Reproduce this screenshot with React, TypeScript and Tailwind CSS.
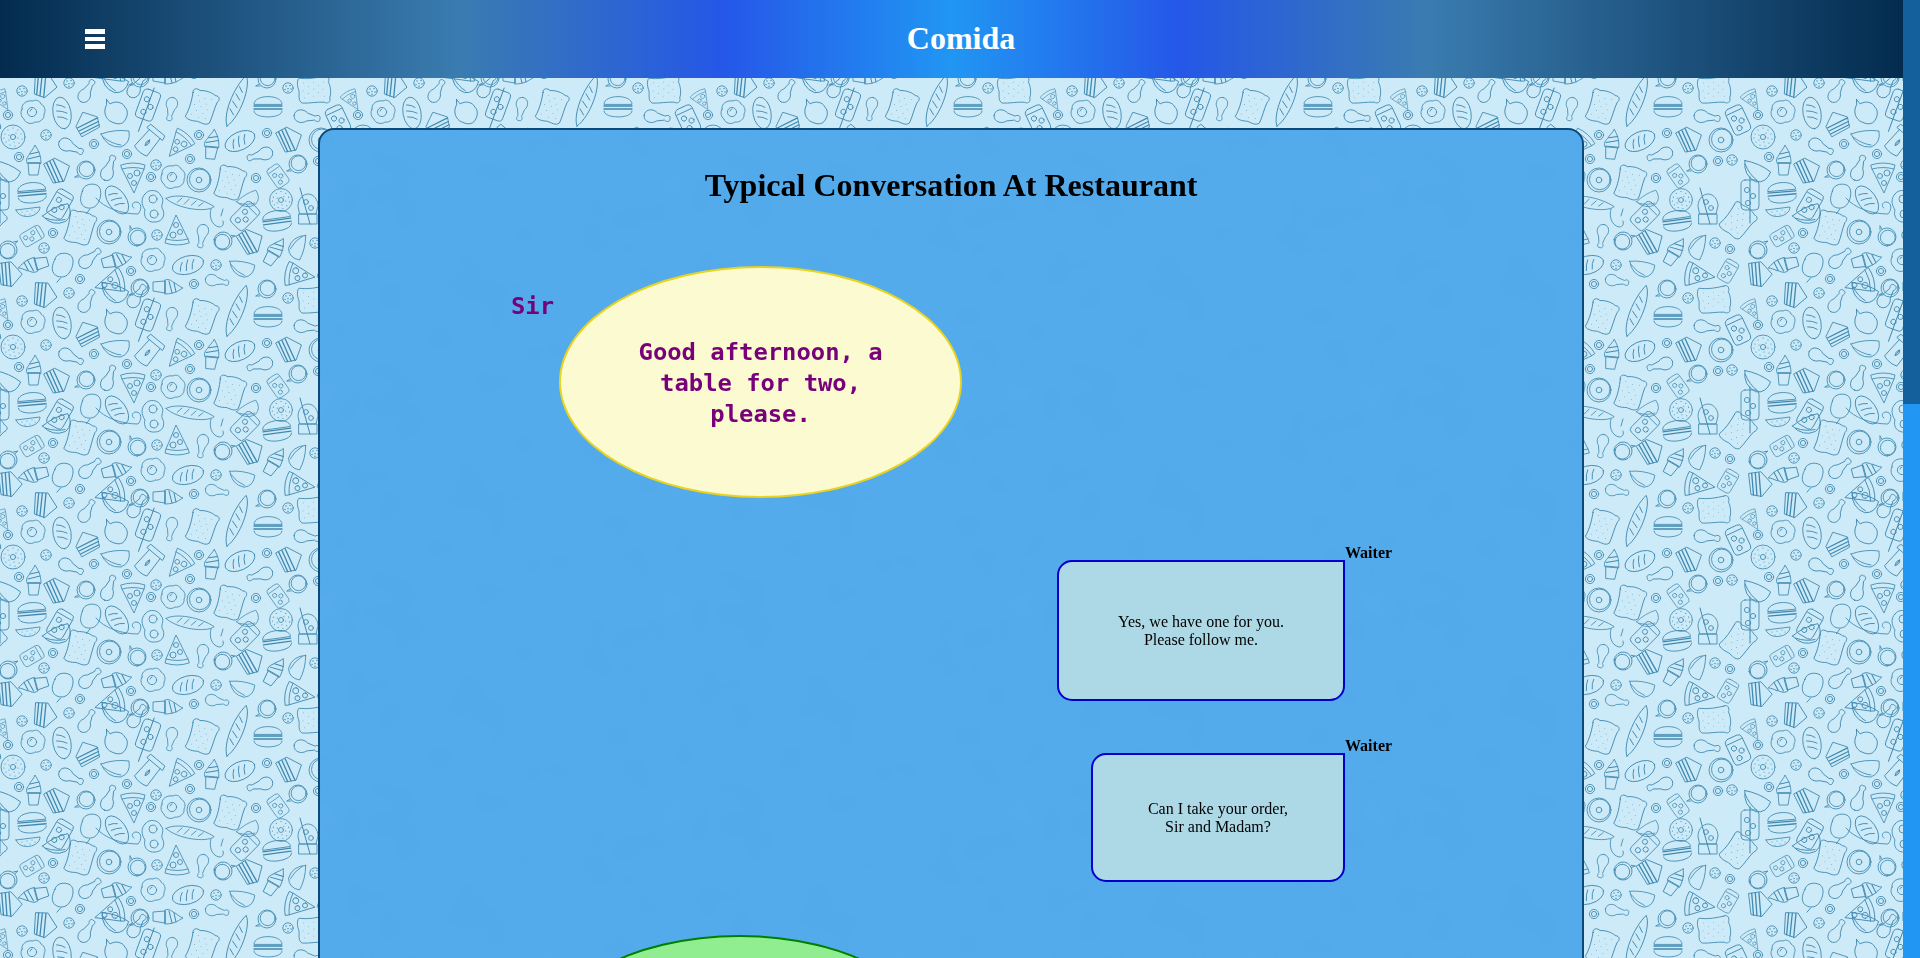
import React from 'react';

// food doodles for the wallpaper, each drawn around 0,0
const dots = (pts: number[][], r = 0.5) =>
  pts.map(([x, y], i) => <circle key={i} cx={x} cy={y} r={r} fill="#3f88b0" stroke="none" />);

const shapes: Record<string, React.ReactNode> = {
  drumstick: (
    <path d="M-13,0 C-13,-7 -4,-8 0,-4 L8,-2 C10,-4 14,-3 13,0 C14,3 10,4 8,2 L0,4 C-4,8 -13,7 -13,0Z" />
  ),
  egg: (
    <>
      <path d="M-11,-3 C-12,-9 -5,-12 0,-11 C3,-13 7,-11 8,-8 C12,-6 13,-1 11,2 C12,7 6,11 2,10 C-2,13 -8,11 -9,7 C-12,5 -13,0 -11,-3Z" />
      <circle cx={-1} cy={0} r={4.6} />
      <path d="M-3,-1 A2.5,2.5 0 0 1 -1,-3" />
    </>
  ),
  loaf: (
    <>
      <ellipse rx={16} ry={9} />
      <path d="M-9,4 Q-8,-1 -5,-4 M-3,5 Q-2,-1 1,-5 M3,5 Q4,-1 7,-4" />
    </>
  ),
  baguette: (
    <>
      <path d="M-27,2 C-18,-7 10,-9 27,-3 C20,6 -12,10 -27,2Z" />
      <path d="M-14,3 L-10,-3 M-6,3 L-2,-4 M2,2 L6,-4 M10,1 L14,-4" />
    </>
  ),
  cake: (
    <>
      <path d="M-12,1 L-2,-12 L12,-4 L12,7 L-8,13Z" />
      <path d="M-11,3 L12,-3 M-10,6.5 L12,1 M-9,10 L12,4.5" strokeWidth={1.3} />
    </>
  ),
  pepper: (
    <path d="M-12,-8 L-7,-5 C-3,-10 4,-11 8,-7 C13,-5 14,2 12,7 C10,12 3,12 -2,11 C-8,9 -11,3 -10,-3 L-12,-8Z" />
  ),
  blob: <path d="M-9,-4 C-9,-12 3,-14 7,-10 C11,-6 10,4 6,9 C3,13 -6,14 -9,8 C-11,4 -10,0 -9,-4Z M0,13 L-3,18" />,
  cookie: (
    <>
      <circle r={5.2} />
      {dots([[-2, -2], [2, -2.5], [0, 0.5], [-3, 1.5], [3, 1], [0, 3.2]], 0.7)}
    </>
  ),
  ring: (
    <>
      <circle r={4.6} />
      <circle r={2.6} />
    </>
  ),
  sprinkle: (
    <>
      <circle r={12} />
      <circle r={2.6} />
      {dots([[-8, -3], [-5, -7], [0, -9], [5, -7], [8, -3], [9, 2], [6, 6], [2, 9], [-3, 8], [-7, 5], [-4, -2], [3, -4], [5, 1], [-4, 3], [1, 5], [-9, 1]], 0.6)}
    </>
  ),
  donut: (
    <>
      <circle r={12} />
      <circle cx={0.8} cy={-0.6} r={10.3} />
      <circle r={2.8} />
    </>
  ),
  cup: (
    <>
      <path d="M-7,-9 L-8,13 Q0,16 8,13 L7,-9" />
      <path d="M-10,-9 L10,-9 L9,-14 L-9,-14Z" />
      <path d="M0,-1 Q3,2 0,6 Q-3,2 0,-1Z M0,-1 L0,6" />
    </>
  ),
  pizza: (
    <>
      <path d="M-12,-10 Q0,-14 12,-10 L11,-6 L1,18 L-11,-6Z" />
      <path d="M-11,-6 Q0,-9 11,-6" />
      <circle cx={4} cy={-2} r={3} />
      <circle cx={-3} cy={1} r={2.5} />
      <circle cx={1} cy={8} r={2.5} />
    </>
  ),
  icecream: (
    <>
      <path d="M-6,3 L-5,15 L4,15 L6,3Z" />
      <path d="M-7,3 C-9,-2 -5,-4 -4,-7 C-2,-10 0,-12 1,-15 C3,-11 7,-7 7,3Z" />
      <path d="M-6,-1 L6,-4 M-4,-6 L5,-8" strokeWidth={1} />
    </>
  ),
  toast: (
    <>
      <path d="M-13,-11 C-15,-15 -10,-17 -7,-15 C-2,-17 5,-17 9,-15 C14,-16 15,-12 13,-9 C12,-2 13,6 12,13 C9,17 4,15 0,15 C-4,16 -10,17 -13,14 C-11,5 -12,-4 -13,-11Z" />
      {dots([[-7, -10], [0, -9], [7, -10], [-4, -5], [3, -4], [-8, 0], [-1, 0], [6, 1], [-4, 5], [3, 6], [-8, 10], [0, 11], [7, 10]], 0.4)}
    </>
  ),
  burger: (
    <>
      <path d="M-14,-3 C-14,-13 14,-13 14,-3Z" />
      <path d="M-14,-1 L14,-1 M-14,2 L14,2" strokeWidth={1.3} />
      <path d="M-14,4 C-14,12 14,12 14,4" />
    </>
  ),
  taco: (
    <>
      <path d="M-14,-4 Q0,-9 14,-7 Q16,5 6,9 Q-8,10 -14,-4Z" />
      <path d="M-12,-1 Q-3,6 6,7" />
    </>
  ),
  pan: (
    <>
      <circle r={9} />
      <circle cx={0.6} cy={-0.8} r={7.4} />
      <path d="M-8,5 L-11,7 M-7,7 L-11,7" />
    </>
  ),
  jar: (
    <>
      <rect x={-9} y={-14} width={18} height={28} rx={4} />
      <path d="M-8,-9 L8,-9" />
      <circle cx={-3} cy={-3} r={2.6} />
      <circle cx={3} cy={2} r={2.6} />
      <circle cx={-2} cy={8} r={2.6} />
    </>
  ),
  halfcookie: (
    <>
      <path d="M-12,-3 L12,-6 C12,4 -8,8 -12,-3Z" />
      {dots([[-6, -1], [-1, -2], [4, -3], [-3, 2], [2, 1], [7, -1]], 0.5)}
    </>
  ),
  twoeggs: (
    <>
      <path d="M-8,-12 C-4,-18 6,-16 8,-10 C12,-6 8,-2 9,2 C13,8 10,16 2,16 C-6,17 -10,10 -8,4 C-12,-2 -12,-8 -8,-12Z" />
      <circle cx={0} cy={-7} r={4} />
      <circle cx={1} cy={8} r={4} />
    </>
  ),
  bottle: (
    <>
      <path d="M-10,-2 C-10,-10 -4,-14 0,-14 C6,-14 10,-8 10,-2 L8,6 L-8,6Z" />
      <rect x={-9} y={6} width={18} height={10} />
      <circle cx={-2} cy={-6} r={2.4} />
      <circle cx={3} cy={0} r={2.4} />
      <path d="M-8,-20 L2,16" strokeWidth={1} />
    </>
  ),
  knifejar: (
    <>
      <rect x={-9} y={-15} width={18} height={30} rx={4} />
      <circle cx={-3} cy={-5} r={2.6} />
      <circle cx={3} cy={1} r={2.6} />
      <circle cx={-2} cy={8} r={2.6} />
      <path d="M0,-18 L0,28" strokeWidth={1} />
    </>
  ),
  curve: <path d="M-22,-8 C-14,2 4,8 20,8 C24,4 24,-4 18,-4 C14,-4 13,1 16,2" />,
  hook: <path d="M-6,-9 C-8,-2 -6,7 2,9 C6,9 7,6 6,3 M6,-9 L4,-2" />,
};

type Doodle = [keyof typeof shapes, number, number, number?, number?];

const doodles: Doodle[] = [
  ['cookie', 22, 13],
  ['cake', 45, 7, 110],
  ['cookie', 69, 5],
  ['drumstick', 87, 13, -60, 0.95],
  ['egg', 33, 34],
  ['ring', 8, 37],
  ['loaf', 62, 35, 80],
  ['cake', 87, 45, -12, 0.95],
  ['pepper', 115, 33, 20],
  ['taco', 113, 4, 25],
  ['drumstick', 137, 8, -55],
  ['knifejar', 148, 27, 20],
  ['drumstick', 171, 31, 100, 0.9],
  ['toast', 202, 29, 18],
  ['baguette', 237, 23, -64],
  ['burger', 268, 29],
  ['pan', 267, 1],
  ['cookie', 288, 10],
  ['toast', 314, 12, 85],
  ['drumstick', 307, 39, 8, 1],
  ['jar', 338, 42, -25],
  ['pizza', 1, 21, -30, 0.7],
  ['sprinkle', 13, 59],
  ['cookie', 46, 57],
  ['drumstick', 71, 69, 25],
  ['ring', 94, 66],
  ['taco', 115, 60],
  ['cup', 149, 63, 40],
  ['pizza', 180, 65, 42, 0.95],
  ['ring', 199, 57],
  ['icecream', 212, 66, 5],
  ['loaf', 240, 63, -25],
  ['ring', 267, 55],
  ['cake', 290, 61, 80],
  ['donut', 321, 62],
  ['icecream', 34, 82, 0, 1],
  ['ring', 19, 79],
  ['cake', 58, 92, 80],
  ['taco', 5, 93, 30],
  ['pan', 86, 92],
  ['drumstick', 109, 90, -70],
  ['pizza', 133, 97],
  ['ring', 127, 76],
  ['cookie', 156, 87],
  ['ring', 151, 99],
  ['ring', 190, 81],
  ['egg', 173, 99],
  ['donut', 199, 102],
  ['toast', 230, 105, 15],
  ['drumstick', 260, 77, 165],
  ['pan', 298, 86],
  ['jar', 278, 98, -35, 0.8],
  ['ring', 256, 100],
  ['ring', 318, 83],
  ['cookie', 332, 82],
  ['burger', 32, 115, -5],
  ['jar', 60, 126, 30],
  ['halfcookie', 28, 135],
  ['taco', 57, 137, -20],
  ['knifejar', 0, 117],
  ['blob', 91, 118, 5],
  ['loaf', 117, 122, 55],
  ['curve', 118, 128],
  ['twoeggs', 153, 128],
  ['baguette', 190, 125, 15, 0.9],
  ['taco', 248, 122, -25, 0.8],
  ['jar', 245, 138, 45],
  ['hook', 217, 140],
  ['sprinkle', 281, 122, 0, 0.95],
  ['burger', 277, 143, -8],
  ['bottle', 308, 130],
  ['toast', 338, 143, 38],
  ['toast', 80, 150, 15],
  ['donut', 109, 154],
  ['pan', 137, 159, 90],
  ['cookie', 157, 157],
  ['pizza', 177, 155, 180],
  ['drumstick', 202, 158, 100, 0.9],
  ['pan', 223, 163, 190],
  ['cake', 251, 163, 75],
  ['taco', 298, 168, 110, 0.9],
  ['icecream', 275, 173, 30],
  ['jar', 32, 158, 60, 0.8],
  ['ring', 53, 155],
  ['cookie', 44, 170],
  ['pan', 8, 172, 170],
  ['cookie', 315, 165],
  ['ring', 330, 171],
  ['icecream', 33, 187, -105],
  ['blob', 63, 187, 10],
  ['drumstick', 90, 180, -40],
  ['icecream', 117, 182, 75],
  ['egg', 153, 182],
  ['ring', 131, 193],
  ['loaf', 188, 187, -15],
  ['cookie', 216, 187],
  ['taco', 241, 190, 15, 0.9],
  ['pizza', 297, 197, -80],
  ['cake', 10, 196, 100],
  ['ring', 80, 201],
  ['pizza', 112, 204, 75],
  ['jar', 328, 193, 30, 0.8],
  ['drumstick', 217, 203, 10, 0.9],
  ['ring', 194, 206],
  ['icecream', 168, 209, 90],
  ['pan', 140, 210],
];

function Wallpaper() {
  return (
    <svg className="absolute inset-0 w-full h-full" aria-hidden="true">
      <defs>
        <g id="tile" fill="none" stroke="#3f88b0" strokeWidth={0.85} strokeLinejoin="round" strokeLinecap="round">
          {doodles.map(([name, x, y, r = 0, s = 1], i) => (
            <g key={i} transform={`translate(${x} ${y}) rotate(${r}) scale(${s})`}>
              {shapes[name]}
            </g>
          ))}
        </g>
        <pattern id="food" width={350} height={210} patternUnits="userSpaceOnUse">
          <use href="#tile" />
          <use href="#tile" x={350} />
          <use href="#tile" x={-350} />
          <use href="#tile" y={210} />
          <use href="#tile" y={-210} />
        </pattern>
      </defs>
      <rect width="100%" height="100%" fill="url(#food)" />
    </svg>
  );
}

function WaiterBox({ width, height, marginTop, lines }: { width: string; height: string; marginTop: string; lines: string[] }) {
  return (
    <div className={`flex justify-end pr-[237px] ${marginTop}`}>
      <div className={`relative flex items-center justify-center ${width} ${height} bg-[#add8e6] border-2 border-[#0000cd] rounded-[15px] rounded-tr-none text-base leading-[18px] text-center text-black`}>
        <p>
          {lines[0]}
          <br />
          {lines[1]}
        </p>
        <span className="absolute left-full top-[-18px] ml-[2px] font-bold text-black whitespace-nowrap">Waiter</span>
      </div>
    </div>
  );
}

export default function App() {
  return (
    <div className="flex h-screen overflow-hidden font-['Liberation_Serif',serif]">
      <div className="flex flex-col flex-1 min-w-0">
        <header className="flex items-center h-[78px] pl-[85px] pr-[86px] flex-shrink-0 bg-[linear-gradient(to_right,#032b4e_0%,#3a7cb0_24%,#2557e8_38%,#2196f3_50%,#2557e8_62%,#3a7cb0_75%,#032b4e_100%)]">
          <div className="flex flex-col gap-[3px] w-5">
            <div className="h-[4.5px] bg-white"></div>
            <div className="h-[4.5px] bg-white"></div>
            <div className="h-[4.5px] bg-white"></div>
          </div>
          <h1 className="flex-1 text-center text-[32px] font-bold text-white mb-[2px]">Comida</h1>
        </header>

        <main className="relative flex-1 min-h-0 overflow-hidden bg-[#cceaf7]">
          <Wallpaper />
          <div className="relative w-[1266px] ml-[318px] mt-[50px] pb-10 border-2 border-[#0d4a7c] rounded-2xl bg-[#4ea8eb]/95 backdrop-blur-sm">
            <h2 className="pt-[37px] text-center text-[32px] leading-[37px] font-bold text-black">
              Typical Conversation At Restaurant
            </h2>

            <div className="flex items-start gap-[5px] mt-[62px] ml-[191px] font-['DejaVu_Sans_Mono',monospace] font-bold text-[23.85px] leading-[31px] text-[#780078]">
              <span className="mt-[25px]">Sir</span>
              <div className="flex items-center justify-center w-[403px] h-[232px] pt-[2px] rounded-[50%] border-2 border-[#e8d320] bg-[#fbfad0] text-center">
                <p>
                  Good afternoon, a
                  <br />
                  table for two,
                  <br />
                  please.
                </p>
              </div>
            </div>

            <WaiterBox width="w-[288px]" height="h-[141px]" marginTop="mt-[62px]" lines={['Yes, we have one for you.', 'Please follow me.']} />
            <WaiterBox width="w-[254px]" height="h-[129px]" marginTop="mt-[52px]" lines={['Can I take your order,', 'Sir and Madam?']} />

            <div className="w-[403px] h-[231px] mt-[53px] ml-[218px] rounded-[50%] border-2 border-[#008000] bg-[#90ee90]"></div>
          </div>
        </main>
      </div>

      <div className="flex flex-col w-[17px] flex-shrink-0 bg-[#2196f3]">
        <div className="h-[404px] bg-[#14609c]"></div>
      </div>
    </div>
  );
}
